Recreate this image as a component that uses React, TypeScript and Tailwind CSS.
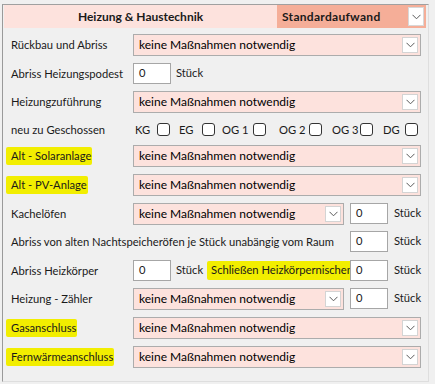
import type { ReactNode } from 'react'

const FONT = "font-['Lato',_'Liberation_Sans',_sans-serif]"

function Chevron() {
  return (
    <svg width="9" height="6" viewBox="0 0 9 6" className="block">
      <path d="M0.5 0.8 L4.5 4.8 L8.5 0.8" fill="none" stroke="#5a5a5a" strokeWidth="1" />
    </svg>
  )
}

function DropBtn() {
  return (
    <div className="flex h-[16px] w-[16px] shrink-0 items-center justify-center border border-[#d4d4d4] bg-white">
      <Chevron />
    </div>
  )
}

function Select({ wide = true }: { wide?: boolean }) {
  return (
    <div
      className={`flex h-[22px] shrink-0 items-center justify-between border border-[#acacac] bg-[#fde2dd] pl-[5px] pr-[2px] ${
        wide ? 'w-[288px]' : 'w-[211px]'
      }`}
    >
      <span className="whitespace-nowrap text-[12px] text-[#000]">keine Maßnahmen notwendig</span>
      <DropBtn />
    </div>
  )
}

function Num() {
  return (
    <div className="flex h-[21px] w-[38px] shrink-0 items-center border border-[#a6a6a6] bg-white pl-[5px]">0</div>
  )
}

function Mark({ children, pull = true }: { children: ReactNode; pull?: boolean }) {
  return (
    <span className={`${pull ? '-ml-[5px] pl-[5px]' : 'pl-[4px]'} rounded-[2px] bg-[#f2ee00] py-[1px] pr-[1px]`}>
      {children}
    </span>
  )
}

function Row({ h, children }: { h: number; children: ReactNode }) {
  return (
    <div className="flex items-start whitespace-nowrap" style={{ height: h }}>
      {children}
    </div>
  )
}

function Label({ children }: { children: ReactNode }) {
  return <div className="flex h-[22px] w-[122px] shrink-0 items-center whitespace-nowrap">{children}</div>
}

function Stueck({ ml = 'ml-[6px]' }: { ml?: string }) {
  return <div className={`${ml} flex h-[21px] shrink-0 items-center`}>Stück</div>
}

function Floor({ name, lw, gw }: { name: string; lw: string; gw: string }) {
  return (
    <div className={`flex shrink-0 items-center ${gw}`}>
      <span className={`${lw} shrink-0`}>{name}</span>
      <div className="h-[13px] w-[13px] shrink-0 rounded-[3px] border border-[#333] bg-white" />
    </div>
  )
}

export default function App() {
  return (
    <div className={`h-[384px] w-[435px] bg-[#f0f0f0] pl-[2px] pt-[4px] text-[11.2px] text-[#1a1a1a] ${FONT}`}>
      <div className="h-[378px] w-[427px] border-b border-l border-r border-t border-b-[#dedede] border-l-[#9a9a9a] border-r-[#dedede] border-t-[#a0a0a0]">
        <div className="flex h-[23px] pl-[1px] text-[12px]">
          <div className="flex w-[273px] items-center justify-center bg-[#fde2dd] font-bold">Heizung &amp; Haustechnik</div>
          <div className="flex w-[149px] items-center justify-between bg-[#f5ae98] pl-[5px] pr-[2px] font-bold">
            <span className="tracking-[0.3px]">Standardaufwand</span>
            <div className="flex h-[19px] w-[16px] items-center justify-center border border-[#d8d8d8] bg-white">
              <Chevron />
            </div>
          </div>
        </div>

        <div className="flex flex-col pl-[8px] pt-[6px]">
          <Row h={29}>
            <Label>Rückbau und Abriss</Label>
            <Select />
          </Row>
          <Row h={28}>
            <Label>Abriss Heizungspodest</Label>
            <Num />
            <Stueck ml="ml-[5px]" />
          </Row>
          <Row h={28}>
            <Label>Heizungzuführung</Label>
            <Select />
          </Row>
          <Row h={26}>
            <Label>neu zu Geschossen</Label>
            <div className="flex h-[22px] items-center pl-[2px]">
              <Floor name="KG" lw="w-[22px]" gw="w-[44px]" />
              <Floor name="EG" lw="w-[23px]" gw="w-[43px]" />
              <Floor name="OG 1" lw="w-[31px]" gw="w-[57px]" />
              <Floor name="OG 2" lw="w-[30px]" gw="w-[53px]" />
              <Floor name="OG 3" lw="w-[28px]" gw="w-[51px]" />
              <Floor name="DG" lw="w-[22px]" gw="w-[36px]" />
            </div>
          </Row>
          <Row h={29}>
            <Label>
              <Mark>Alt - Solaranlage</Mark>
            </Label>
            <Select />
          </Row>
          <Row h={29}>
            <Label>
              <Mark>Alt - PV-Anlage</Mark>
            </Label>
            <Select />
          </Row>
          <Row h={28}>
            <Label>Kachelöfen</Label>
            <Select wide={false} />
            <div className="ml-[6px]">
              <Num />
            </div>
            <Stueck />
          </Row>
          <Row h={29}>
            <div className="flex h-[22px] w-[339px] shrink-0 items-center">
              Abriss von alten Nachtspeicheröfen je Stück unabängig vom Raum
            </div>
            <Num />
            <Stueck />
          </Row>
          <Row h={28}>
            <Label>Abriss Heizkörper</Label>
            <div className="flex h-[21px] w-[217px] shrink-0 items-center">
              <Num />
              <Stueck ml="ml-[5px]" />
              <div className="ml-[4px] flex items-center">
                <Mark pull={false}>Schließen Heizkörpernischen</Mark>
              </div>
            </div>
            <Num />
            <Stueck />
          </Row>
          <Row h={29}>
            <Label>Heizung - Zähler</Label>
            <Select wide={false} />
            <div className="ml-[6px]">
              <Num />
            </div>
            <Stueck />
          </Row>
          <Row h={29}>
            <Label>
              <Mark>Gasanschluss</Mark>
            </Label>
            <Select />
          </Row>
          <Row h={29}>
            <Label>
              <Mark>Fernwärmeanschluss</Mark>
            </Label>
            <Select />
          </Row>
        </div>
      </div>
    </div>
  )
}
